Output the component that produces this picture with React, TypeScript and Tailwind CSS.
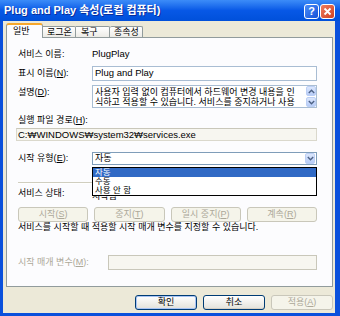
import React from "react";

const Chevron = ({ up = false }: { up?: boolean }) => (
  <svg width="7" height="5" viewBox="0 0 7 5">
    <path
      d={up ? "M0.8 4 L3.5 1.3 L6.2 4" : "M0.8 1 L3.5 3.7 L6.2 1"}
      fill="none"
      stroke="#4D6185"
      strokeWidth="1.4"
    />
  </svg>
);

const SmallBtn = ({ up = false, h = "h-[9px]" }: { up?: boolean; h?: string }) => (
  <div
    className={`w-[10px] ${h} rounded-[2px] border border-[#BCCFF5] bg-gradient-to-b from-[#DCE7FC] to-[#B7CCF7] flex items-center justify-center`}
  >
    <Chevron up={up} />
  </div>
);

const Btn = ({
  children,
  disabled = false,
  def = false,
  w = "w-[61px]",
}: {
  children: React.ReactNode;
  disabled?: boolean;
  def?: boolean;
  w?: string;
}) =>
  disabled ? (
    <div
      className={`${w} h-[15px] rounded-[3px] border border-[#C9C7BA] bg-[#F5F4EA] text-[#ACA899] flex items-center justify-center text-[9px] leading-none`}
    >
      {children}
    </div>
  ) : (
    <div
      className={`${w} h-[15px] rounded-[3px] border border-[#003C74] bg-gradient-to-b from-[#FFFFFF] to-[#E3E2DA] flex items-center justify-center text-[9px] leading-none ${
        def ? "shadow-[inset_0_0_0_1px_#A9C4F4]" : "shadow-[inset_0_-1px_0_#D6D0C5]"
      }`}
    >
      {children}
    </div>
  );

export default function App() {
  return (
    <div className="w-[340px] h-[316px] bg-[#0A50DC] flex flex-col overflow-hidden font-['Liberation_Sans','Noto_Sans_CJK_KR',sans-serif] text-black">
      {/* Title bar */}
      <div className="h-[21px] shrink-0 flex items-center pl-[4px] pr-[5px] bg-gradient-to-b from-[#3C8CF8] via-[#0758E6] to-[#0050DA]">
        <div className="flex-1 text-white font-bold text-[11px] leading-none whitespace-nowrap [text-shadow:1px_1px_0_#0A2E9C]">
          Plug and Play 속성(로컬 컴퓨터)
        </div>
        <div className="flex gap-[1px] mt-[1px]">
          <div className="w-[15px] h-[15px] rounded-[3px] border border-white bg-gradient-to-br from-[#4B8DF8] to-[#1650D8] flex items-center justify-center text-white font-bold text-[11px] leading-none">
            ?
          </div>
          <div className="w-[15px] h-[15px] rounded-[3px] border border-white bg-gradient-to-br from-[#EE7C5E] to-[#CF3F20] flex items-center justify-center">
            <svg width="9" height="9" viewBox="0 0 9 9">
              <path d="M1.5 1.5 L7.5 7.5 M7.5 1.5 L1.5 7.5" stroke="white" strokeWidth="1.8" />
            </svg>
          </div>
        </div>
      </div>

      {/* Body */}
      <div className="flex-1 ml-[3px] mr-[5px] mb-[3px] bg-[#ECE9D8] flex flex-col pl-[3px] pr-[2px] text-[9px]">
        {/* Tabs */}
        <div className="h-[16px] flex items-end relative z-10">
          <div className="w-[37px] h-[15px] -mb-px bg-[#FCFCFE] border-x border-[#919B9C] rounded-t-[3px] border-t-[2px] border-t-[#F6A72C] flex items-center pl-[6px] leading-none">
            일반
          </div>
          <div className="w-[33px] h-[11px] bg-gradient-to-b from-[#FFFFFF] to-[#ECEBE6] border-t border-r border-[#919B9C] rounded-tr-[2px] flex items-center pl-[4px] leading-none">
            로그온
          </div>
          <div className="w-[34px] h-[11px] bg-gradient-to-b from-[#FFFFFF] to-[#ECEBE6] border-t border-r border-[#919B9C] rounded-tr-[2px] flex items-center pl-[5px] leading-none">
            복구
          </div>
          <div className="w-[33px] h-[11px] bg-gradient-to-b from-[#FFFFFF] to-[#ECEBE6] border-t border-r border-[#919B9C] rounded-t-[2px] flex items-center pl-[4px] leading-none">
            종속성
          </div>
        </div>

        {/* Panel */}
        <div className="h-[250px] shrink-0 border border-[#919B9C] bg-[#FCFCFE] relative pl-[11px] pr-[15px] flex flex-col">
          <div className="mt-[9px] h-[14px] flex items-center leading-none">
            <div className="w-[74px]">서비스 이름:</div>
            <div className="text-[9.5px]">PlugPlay</div>
          </div>
          <div className="mt-[5px] h-[15px] flex items-center leading-none">
            <div className="w-[74px]">
              표시 이름(<u>N</u>):
            </div>
            <div className="flex-1 h-full border border-[#A9BDD3] bg-white flex items-center pl-[2px] pb-[2px] text-[9.5px]">
              Plug and Play
            </div>
          </div>
          <div className="mt-[4px] h-[23px] flex leading-none">
            <div className="w-[74px] pt-[3px]">
              설명(<u>D</u>):
            </div>
            <div className="flex-1 h-full border border-[#A9BDD3] bg-white flex">
              <div className="flex-1 overflow-hidden pl-[2px] pt-[1px] whitespace-nowrap leading-[10px]">
                <div>사용자 입력 없이 컴퓨터에서 하드웨어 변경 내용을 인</div>
                <div>식하고 적용할 수 있습니다. 서비스를 중지하거나 사용</div>
              </div>
              <div className="flex flex-col justify-between">
                <SmallBtn up h="h-[10px]" />
                <SmallBtn h="h-[10px]" />
              </div>
            </div>
          </div>
          <div className="mt-[6px] h-[12px] flex items-center leading-none">
            실행 파일 경로(<u>H</u>):
          </div>
          <div className="mt-[2px] h-[13px] ml-[-2px] border border-[#DAD8CC] border-t-[#C9C7BA] bg-[#F7F6F0] flex items-center pl-[1px] text-[9.5px] leading-none whitespace-nowrap">
            C:₩WINDOWS₩system32₩services.exe
          </div>
          <div className="mt-[11px] h-[13px] flex items-center leading-none">
            <div className="w-[74px]">
              시작 유형(<u>E</u>):
            </div>
            <div className="flex-1 h-full border border-[#7F9DB9] bg-white flex items-center pl-[2px] pr-[1px]">
              <div className="flex-1">자동</div>
              <SmallBtn h="h-[11px]" />
            </div>
          </div>
          <div className="mt-[17px] h-[2px] border-t border-[#D0CEBF] border-b border-b-white" />
          <div className="mt-[3px] h-[12px] flex items-center leading-none">
            <div className="w-[74px]">서비스 상태:</div>
            <div className="pt-[6px]">시작됨</div>
          </div>
          <div className="mt-[8px] h-[15px] grid grid-cols-4 gap-[6px]">
            <Btn disabled w="w-full">
              시작(<u>S</u>)
            </Btn>
            <Btn disabled w="w-full">
              중지(<u>T</u>)
            </Btn>
            <Btn disabled w="w-full">
              일시 중지(<u>P</u>)
            </Btn>
            <Btn disabled w="w-full">
              계속(<u>R</u>)
            </Btn>
          </div>
          <div className="mt-[1px] h-[9px] leading-[9px] whitespace-nowrap">
            서비스를 시작할 때 적용할 시작 매개 변수를 지정할 수 있습니다.
          </div>
          <div className="mt-[23px] h-[15px] flex items-center leading-none">
            <div className="w-[90px] text-[#ACA899]">
              시작 매개 변수(<u>M</u>):
            </div>
            <div className="flex-1 h-full border border-[#C9C7BA] bg-[#F7F6F0]" />
          </div>

          {/* Dropdown list overlay */}
          <div className="absolute left-[85px] top-[129px] w-[225px] border border-black bg-white flex flex-col text-[8.5px] leading-[9px] z-20">
            <div className="h-[9px] bg-[#316AC5] text-white pl-[2px]">자동</div>
            <div className="h-[9px] pl-[2px]">수동</div>
            <div className="h-[9px] pl-[2px]">사용 안 함</div>
          </div>
        </div>

        <div className="mt-[8px] h-[15px] flex justify-end gap-[6px]">
          <Btn def w="w-[62px]">확인</Btn>
          <Btn w="w-[62px]">취소</Btn>
          <Btn disabled w="w-[62px]">
            적용(<u>A</u>)
          </Btn>
        </div>
      </div>
    </div>
  );
}
